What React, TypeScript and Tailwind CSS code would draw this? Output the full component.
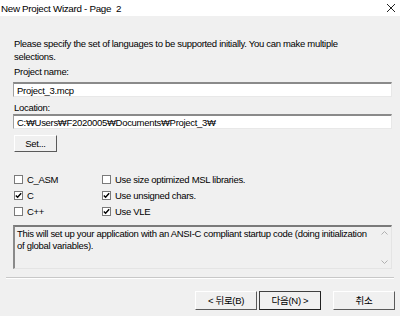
import React from "react";

const font = { fontFamily: '"Liberation Sans", "Noto Sans CJK KR", sans-serif' };

function Check({ checked }: { checked?: boolean }) {
  return (
    <span className="w-[9px] h-[9px] border border-[#7a7a7a] bg-white flex items-center justify-center shrink-0">
      {checked && (
        <svg width="7" height="7" viewBox="0 0 7 7">
          <path d="M0.8 3.4 L2.6 5.3 L6.2 1.2" stroke="#000" strokeWidth="1.4" fill="none" />
        </svg>
      )}
    </span>
  );
}

function Option({ label, checked }: { label: string; checked?: boolean }) {
  return (
    <label className="flex items-center gap-[4px] h-[16px]">
      <Check checked={checked} />
      <span>{label}</span>
    </label>
  );
}

function Field({ value }: { value: string }) {
  return (
    <div className="h-[15px] bg-white border-t-2 border-l border-t-[#8a8a8a] border-l-[#a0a0a0] border-r border-b border-r-[#e8e8e8] border-b-[#e8e8e8] flex items-center pl-[3px]">
      {value}
    </div>
  );
}

function Btn({ label, main }: { label: string; main?: boolean }) {
  return (
    <button
      className={
        "w-[62px] h-[19px] flex items-center justify-center bg-[#f0f0f0] " +
        (main
          ? "border border-t-[#404040] border-l-[#404040] border-r-[#202020] border-b-[#202020]"
          : "border border-t-white border-l-white border-r-[#5a5a5a] border-b-[#5a5a5a]")
      }
    >
      {label}
    </button>
  );
}

export default function App() {
  return (
    <div
      className="w-[400px] h-[316px] bg-[#f0f0f0] text-black text-[9.5px] tracking-[-0.3px] leading-[13px] flex flex-col"
      style={font}
    >
      <div className="h-[16px] bg-white flex items-center justify-between pl-[1px] pr-[4px] text-[9.8px]">
        <span>New Project Wizard - Page&nbsp; 2</span>
        <svg width="10" height="10" viewBox="0 0 10 10">
          <path d="M1 1 L9 9 M9 1 L1 9" stroke="#222" strokeWidth="1" />
        </svg>
      </div>

      <div className="flex flex-col pl-[13px] pr-[8px] pt-[21px]">
        <p className="pl-[1px]">
          Please specify the set of languages to be supported initially. You can make multiple
          <br />
          selections.
        </p>
        <div className="mt-[2px] pl-[1px]">Project name:</div>
        <div className="mt-[4px] w-[379px]">
          <Field value="Project_3.mcp" />
        </div>
        <div className="mt-[4px] pl-[1px]">Location:</div>
        <div className="w-[379px]">
          <Field value="C:₩Users₩F2020005₩Documents₩Project_3₩" />
        </div>
        <button className="mt-[6px] ml-[1px] w-[43px] h-[17px] flex items-center justify-center border border-t-white border-l-white border-r-[#5a5a5a] border-b-[#5a5a5a]">
          Set...
        </button>

        <div className="mt-[19px] ml-[1px] flex">
          <div className="w-[88px] flex flex-col">
            <Option label="C_ASM" />
            <Option label="C" checked />
            <Option label="C++" />
          </div>
          <div className="flex flex-col">
            <Option label="Use size optimized MSL libraries." />
            <Option label="Use unsigned chars." checked />
            <Option label="Use VLE" checked />
          </div>
        </div>

        <div className="mt-[6px] w-[379px] h-[44px] border-t-2 border-l-2 border-t-[#7a7a7a] border-l-[#8a8a8a] border-r border-b border-r-[#e4e4e4] border-b-[#e4e4e4] flex">
          <div className="flex-1 pl-[2px] pt-[1px] leading-[12px]">
            This will set up your application with an ANSI-C compliant startup code (doing initialization
            <br />
            of global variables).
          </div>
          <div className="w-[14px] flex flex-col justify-between items-center py-[4px]">
            <svg width="7" height="4" viewBox="0 0 7 4">
              <path d="M0.5 3.5 L3.5 0.5 L6.5 3.5" stroke="#b0b0b0" fill="none" />
            </svg>
            <svg width="7" height="4" viewBox="0 0 7 4">
              <path d="M0.5 0.5 L3.5 3.5 L6.5 0.5" stroke="#b0b0b0" fill="none" />
            </svg>
          </div>
        </div>
      </div>

      <div className="mt-[8px] mx-[6px] h-[2px] border-t border-t-[#c8c8c8] border-b border-b-white" />

      <div className="mt-[12px] flex pl-[195px] gap-[2px]">
        <Btn label="< 뒤로(B)" />
        <Btn label="다음(N) >" main />
        <div className="w-[8px]" />
        <Btn label="취소" />
      </div>
    </div>
  );
}
